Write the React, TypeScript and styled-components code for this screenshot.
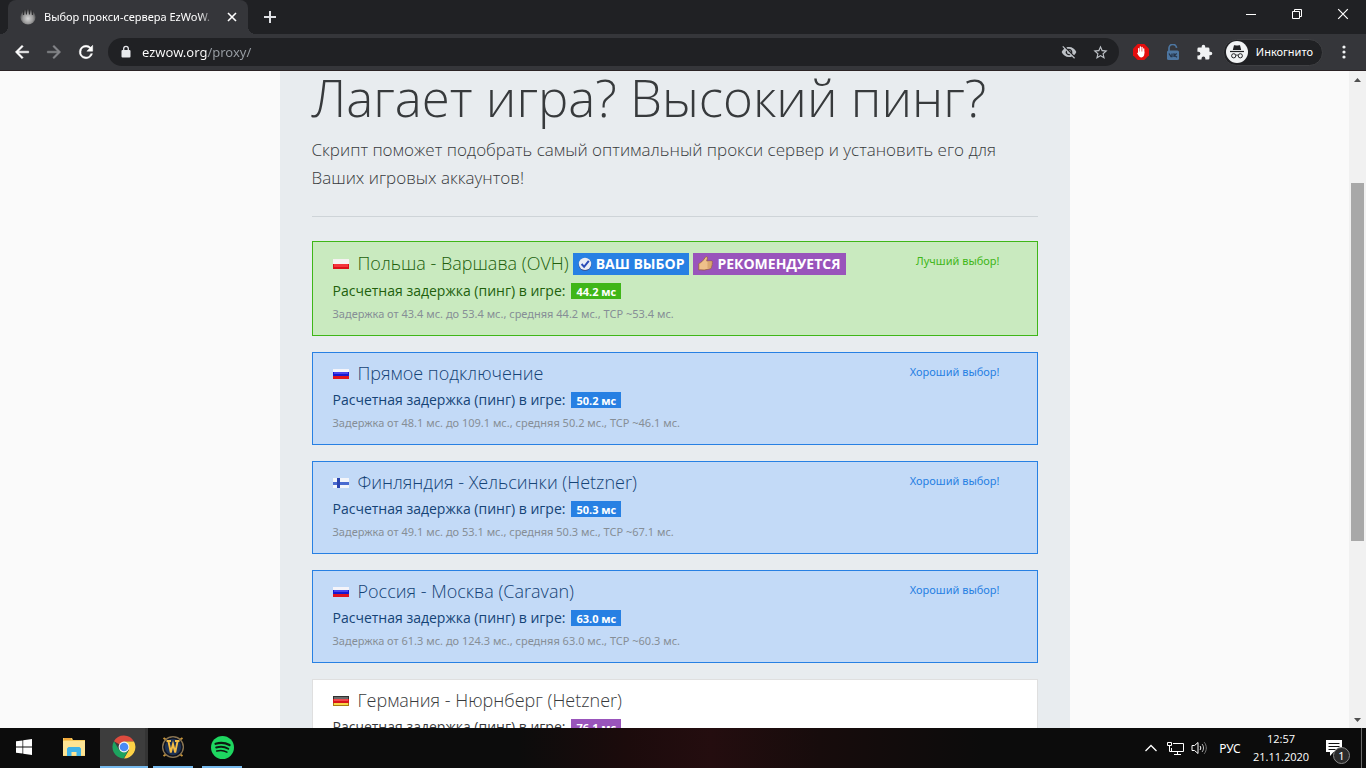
import React from "react";
import styled, { createGlobalStyle, css } from "styled-components";

const GlobalStyle = createGlobalStyle`
  * { box-sizing: border-box; }
  html, body { margin: 0; height: 100%; overflow: hidden; }
  #root { height: 100%; }
  body { font-family: "Noto Sans", "Open Sans", sans-serif; background: #202124; color: #373a3c; }
  button, input { font: inherit; border: 0; padding: 0; margin: 0; background: none; color: inherit; }
  svg { display: block; flex: none; }
`;

const Screen = styled.div`
  display: flex;
  flex-direction: column;
  height: 100vh;
`;

/* ---------- browser ---------- */

const TabStrip = styled.header`
  display: flex;
  height: 34px;
  background: #202124;
  color: #fff;
`;

const TabFoot = styled.span<{ $side: "left" | "right" }>`
  width: 8px;
  height: 8px;
  align-self: flex-end;
  background: radial-gradient(circle at ${(p) => (p.$side === "left" ? "0 0" : "100% 0")}, #202124 8px, #35363a 8px);
`;

const Tab = styled.div`
  display: flex;
  align-items: center;
  width: 240px;
  padding: 0 8px 0 12px;
  gap: 8px;
  border-radius: 8px 8px 0 0;
  background: #35363a;
`;

const TabTitle = styled.span`
  flex: 1;
  overflow: hidden;
  white-space: nowrap;
  font-size: 11px;
  line-height: 18px;
  mask-image: linear-gradient(to right, #000 90%, transparent);
`;

const IconButton = styled.button<{ $width: number }>`
  display: flex;
  align-items: center;
  justify-content: center;
  flex: none;
  width: ${(p) => p.$width}px;
`;

const WindowControls = styled.div`
  display: flex;
  height: 28px;
  margin-left: auto;
`;

const Toolbar = styled.nav`
  display: flex;
  align-items: center;
  height: 37px;
  padding: 0 6px;
  background: #35363a;
  border-bottom: 1px solid #2b2325;
  color: #fff;
`;

const AddressBar = styled.div`
  display: flex;
  align-items: center;
  flex: 1;
  height: 28px;
  margin: 0 6px;
  padding: 0 2px 0 12px;
  gap: 10px;
  border-radius: 14px;
  background: #202124;
`;

const AddressInput = styled.input`
  flex: 1;
  min-width: 0;
  height: 20px;
  font-size: 13px;
  line-height: 20px;
  outline: 0;
  color: transparent;
  background: linear-gradient(to right, #fff 66px, #9aa0a6 66px);
  background-clip: text;
`;

const AddressActions = styled.div`
  display: flex;
  height: 28px;
`;

const Incognito = styled.button`
  display: flex;
  align-items: center;
  gap: 8px;
  height: 27px;
  margin: 0 5px 0 2px;
  padding: 0 9px 0 2px;
  border: 1px solid #3f4043;
  border-radius: 14px;
  background: #202124;
  font-size: 11px;
  line-height: 20px;
`;

/* ---------- page ---------- */

const Viewport = styled.div`
  display: flex;
  flex: 1;
  min-height: 0;
  background: #fafafa;
`;

const Page = styled.main`
  flex: 1;
  min-width: 0;
  overflow: hidden;
`;

const Container = styled.div`
  max-width: 790px;
  margin: 0 auto;
  padding: 0 32px;
  background: #e8ecef;
`;

const Heading = styled.h1`
  margin: 0 0 13px;
  font-family: "Open Sans", sans-serif;
  font-size: 51px;
  font-weight: 300;
  line-height: 52px;
`;

const Lead = styled.p`
  margin: 0;
  font-family: "Open Sans", sans-serif;
  font-size: 17px;
  font-weight: 300;
  line-height: 28px;
`;

const Rule = styled.hr`
  height: 1px;
  margin: 24px 0;
  border: 0;
  background: #ced4d8;
`;

type Tone = "best" | "good" | "plain";

const tones: Record<Tone, { border: string; back: string; text: string; accent: string }> = {
  best: { border: "#3fb618", back: "#c9eabf", text: "#215f0c", accent: "#3fb618" },
  good: { border: "#2780e3", back: "#c3daf7", text: "#144376", accent: "#2780e3" },
  plain: { border: "#dfdfdf", back: "#ffffff", text: "#373a3c", accent: "#9954bb" },
};

const List = styled.ul`
  display: flex;
  flex-direction: column;
  gap: 16px;
  margin: 0;
  padding: 0;
  list-style: none;
`;

const Card = styled.li<{ $tone: Tone }>`
  display: flex;
  justify-content: space-between;
  padding: 8px 37px 11px 20px;
  ${(p) => css`
    border: 1px solid ${tones[p.$tone].border};
    background: ${tones[p.$tone].back};
    color: ${tones[p.$tone].text};
  `}
`;

const CardTitle = styled.h2<{ $tall: boolean }>`
  display: flex;
  align-items: center;
  gap: 4px;
  margin: 0;
  height: ${(p) => (p.$tall ? 28 : 26)}px;
  padding-bottom: 2px;
  font-family: "Open Sans", sans-serif;
  font-size: 18px;
  font-weight: 300;
  line-height: 24px;
`;

const Place = styled.span`
  margin-left: 4px;
`;

const Tag = styled.span<{ $color: string }>`
  display: inline-flex;
  align-items: center;
  gap: 4px;
  height: 22px;
  margin-top: 1px;
  padding: 0 5px;
  background: ${(p) => p.$color};
  color: #fff;
  font-size: 14px;
  font-weight: 700;
  line-height: 22px;
`;

const PingLine = styled.p`
  display: flex;
  align-items: center;
  gap: 6px;
  margin: 0;
  font-family: "Open Sans", sans-serif;
  font-size: 14px;
  line-height: 26px;
`;

const PingBadge = styled.span<{ $color: string }>`
  height: 16px;
  padding: 0 5px;
  background: ${(p) => p.$color};
  color: #fff;
  font-size: 11px;
  font-weight: 700;
  line-height: 17px;
`;

const Details = styled.p`
  margin: 0;
  color: #868e96;
  font-size: 11px;
  line-height: 20px;
`;

const Verdict = styled.span<{ $color: string }>`
  color: ${(p) => p.$color};
  font-size: 11px;
  line-height: 22px;
`;

const Scrollbar = styled.div`
  display: flex;
  flex-direction: column;
  align-items: center;
  width: 17px;
  background: #f1f1f1;
`;

const ScrollArrow = styled.div`
  display: flex;
  align-items: center;
  justify-content: center;
  height: 17px;
`;

const ScrollGap = styled.div<{ $share: number }>`
  flex: ${(p) => p.$share};
`;

const ScrollThumb = styled.div`
  flex: 358;
  width: 13px;
  background: #a8a8a8;
`;

/* ---------- taskbar ---------- */

const Taskbar = styled.footer`
  display: flex;
  align-items: stretch;
  height: 40px;
  padding-right: 4px;
  color: #fff;
  background: linear-gradient(to right, #0c0c0c 0 38%, #1c0b0c 46%, #240d0f 52%, #170c0c 60%, #0c0c0c 72%);
`;

const TaskButton = styled.button<{ $open?: boolean; $active?: boolean; $spaced?: boolean }>`
  display: flex;
  align-items: center;
  justify-content: center;
  width: ${(p) => (p.$open && !p.$active ? 40 : 48)}px;
  ${(p) => p.$spaced && css`margin: 0 2px;`}
  ${(p) => p.$open && !p.$active && css`margin: 0 4px 0 5px;`}
  ${(p) => p.$active && css`background: #3d3d3d; box-shadow: inset -3px 0 #343434;`}
  border-bottom: ${(p) => (p.$open ? "2px solid #76b9ed" : "2px solid transparent")};
`;

const Tray = styled.div`
  display: flex;
  align-items: center;
  margin-left: auto;
`;

const Language = styled.button`
  width: 38px;
  font-size: 12px;
`;

const Clock = styled.time`
  width: 64px;
  text-align: center;
  font-family: "Open Sans", sans-serif;
  font-size: 11px;
  line-height: 18px;
`;

const Notifications = styled.button`
  position: relative;
  display: flex;
  align-items: center;
  justify-content: center;
  width: 42px;
  height: 40px;
  margin-right: 6px;
`;

const NoticeCount = styled.span`
  position: absolute;
  left: 20px;
  top: 19px;
  width: 17px;
  height: 17px;
  border: 1px solid #8a8a8a;
  border-radius: 50%;
  background: #2b2b2b;
  font-size: 11px;
  line-height: 15px;
  text-align: center;
`;

const DesktopEdge = styled.span`
  width: 1px;
  background: #6a6a6a;
`;

/* ---------- drawings ---------- */

const Favicon = () => (
  <svg width="16" height="16" viewBox="0 0 16 16">
    <defs>
      <radialGradient id="fav" cx="50%" cy="60%" r="55%">
        <stop offset="0" stopColor="#d8d8d8" />
        <stop offset="0.6" stopColor="#9a9a9a" />
        <stop offset="1" stopColor="#4a4a4c" />
      </radialGradient>
    </defs>
    <circle cx="8" cy="8" r="7.6" fill="url(#fav)" />
    <path d="M3.600 1.500v4.500M6.400 0.400v5M9.400 0.400v5M12.400 1.500v4.500" stroke="#2c2c2e" strokeWidth="1.100" />
  </svg>
);

const Cross = ({ size, width }: { size: number; width: number }) => (
  <svg width={size} height={size} viewBox="0 0 10 10" stroke="#fff" strokeWidth={width}>
    <path d="M1 1l8 8M9 1l-8 8" />
  </svg>
);

const Plus = () => (
  <svg width="12" height="12" viewBox="0 0 12 12" fill="#dfe1e5">
    <path d="M5 0h2v5h5v2H7v5H5V7H0V5h5z" />
  </svg>
);

const Arrow = ({ color, flip }: { color: string; flip?: boolean }) => (
  <svg width="20" height="20" viewBox="0 0 24 24" fill={color}>
    <path d={flip ? "M12 4l-1.4 1.4 5.6 5.6H4v2h12.200l-5.600 5.600L12 20l8-8z" : "M20 11H7.800l5.600-5.600L12 4l-8 8 8 8 1.400-1.400L7.800 13H20z"} stroke={color} strokeWidth="0.600" />
  </svg>
);

const Reload = () => (
  <svg width="20" height="20" viewBox="0 0 24 24" fill="#fff" stroke="#fff" strokeWidth="0.600">
    <path d="M17.650 6.350A7.960 7.960 0 0 0 12 4a8 8 0 1 0 7.730 10h-2.080A6 6 0 1 1 12 6c1.660 0 3.140.69 4.220 1.780L13 11h7V4z" />
  </svg>
);

const Lock = () => (
  <svg width="12" height="14" viewBox="0 0 12 14">
    <rect x="1.500" y="5" width="9" height="7.500" rx="1" fill="#e8eaed" />
    <path d="M3.700 5.500V3.600a2.300 2.300 0 0 1 4.600 0v1.900" fill="none" stroke="#e8eaed" strokeWidth="1.300" />
  </svg>
);

const EyeOff = () => (
  <svg width="16" height="16" viewBox="0 0 24 24" fill="#bdc1c6">
    <path d="M12 7c2.760 0 5 2.240 5 5 0 .65-.13 1.260-.36 1.830l2.920 2.920c1.510-1.260 2.700-2.890 3.430-4.750-1.730-4.390-6-7.500-11-7.500-1.400 0-2.740.25-3.980.7l2.160 2.160C10.740 7.130 11.350 7 12 7zM2 4.270l2.280 2.280.46.46A11.800 11.800 0 0 0 1 12c1.730 4.390 6 7.500 11 7.500 1.550 0 3.030-.3 4.380-.84l.42.42L19.730 22 21 20.730 3.270 3zM7.530 9.800l1.550 1.550c-.05.21-.08.43-.08.65a3 3 0 0 0 3.650 2.920l1.550 1.550A5 5 0 0 1 7.530 9.800zm4.310-.78l3.150 3.150.02-.16a3 3 0 0 0-3-3z" />
  </svg>
);

const Star = () => (
  <svg width="17" height="17" viewBox="0 0 24 24" fill="#bdc1c6">
    <path d="M22 9.240l-7.190-.62L12 2 9.190 8.630 2 9.240l5.460 4.730L5.820 21 12 17.270 18.180 21l-1.630-7.030zM12 15.400l-3.760 2.270 1-4.280-3.320-2.880 4.380-.38L12 6.100l1.710 4.040 4.380.38-3.320 2.880 1 4.280z" />
  </svg>
);

const AdBlock = () => (
  <svg width="16" height="16" viewBox="0 0 16 16">
    <path d="M4.700 0h6.600L16 4.700v6.600L11.300 16H4.700L0 11.300V4.700z" fill="#e40d0d" />
    <path d="M5.700 9V4.600M7.400 8V3M9.100 8V3.300M10.700 9V4.800" stroke="#fff" strokeWidth="1.300" strokeLinecap="round" />
    <path d="M5.100 7.600h6.200v2.200c0 2-1 3.600-2.800 3.600-1.900 0-2.600-1.300-4.400-4.200.3-.6 1-.3 1.500.2z" fill="#fff" />
  </svg>
);

const VkLock = () => (
  <svg width="14" height="16" viewBox="0 0 14 16">
    <path d="M3 7V4.500a3.800 3.800 0 0 1 7.600-.6" fill="none" stroke="#4d76a1" strokeWidth="1.700" />
    <rect x="1" y="6.500" width="12" height="9.500" rx="1.500" fill="#4d76a1" />
    <path d="M3 9.500l2 3.200h1V9.500M8 9.300v3.700M10.800 9.500L8.300 11.200l2.700 2" fill="none" stroke="#26354a" strokeWidth="1.300" />
  </svg>
);

const Puzzle = () => (
  <svg width="17" height="17" viewBox="0 0 24 24" fill="#f1f3f4">
    <path d="M20.500 11H19V7a2 2 0 0 0-2-2h-4V3.500a2.500 2.500 0 0 0-5 0V5H4a2 2 0 0 0-1.990 2v3.800H3.500a2.700 2.700 0 0 1 0 5.400H2V20a2 2 0 0 0 2 2h3.800v-1.500a2.700 2.700 0 0 1 5.400 0V22H17a2 2 0 0 0 2-2v-4h1.500a2.500 2.500 0 0 0 0-5z" />
  </svg>
);

const IncognitoMark = () => (
  <svg width="22" height="22" viewBox="0 0 22 22">
    <circle cx="11" cy="11" r="11" fill="#f1f3f4" />
    <path d="M8 4.300c1.200-.4 1.700.3 3 .3s1.800-.7 3-.3L15.200 9H6.800z" fill="#202124" />
    <path d="M4 10.500h14" stroke="#202124" strokeWidth="1.200" />
    <g fill="none" stroke="#202124" strokeWidth="1">
      <circle cx="7.700" cy="14.800" r="2.100" />
      <circle cx="14.300" cy="14.800" r="2.100" />
      <path d="M9.800 14.400c.8-.5 1.600-.5 2.400 0" />
    </g>
  </svg>
);

const Dots = () => (
  <svg width="4" height="14" viewBox="0 0 4 14" fill="#f1f3f4">
    <circle cx="2" cy="2" r="1.600" />
    <circle cx="2" cy="7" r="1.600" />
    <circle cx="2" cy="12" r="1.600" />
  </svg>
);

type Country = "pl" | "ru" | "fi" | "de";

const Flag = ({ country }: { country: Country }) => (
  <svg width="17" height="14" viewBox="0 -2 17 14" role="img" aria-label={country}>
    {country === "pl" && (
      <>
        <rect y="1" width="16" height="5" fill="#f6f2f2" />
        <rect y="6" width="16" height="5" fill="#dc0f17" />
        <rect x="1" y="6" width="14" height="3" fill="#f4343a" />
      </>
    )}
    {country === "ru" && (
      <>
        <rect y="1" width="16" height="3" fill="#f4f4fa" />
        <rect y="4" width="16" height="4" fill="#1717cf" />
        <rect x="1" y="4" width="14" height="2" fill="#4545ee" />
        <rect y="8" width="16" height="3" fill="#e0141c" />
      </>
    )}
    {country === "fi" && (
      <>
        <rect y="1" width="16" height="10" fill="#f3f5fa" />
        <rect y="5" width="16" height="3" fill="#4a6bd0" />
        <rect x="4" y="1" width="3" height="10" fill="#2b45b0" />
      </>
    )}
    {country === "de" && (
      <>
        <rect y="1" width="16" height="3" fill="#2f2f2f" />
        <rect x="1" y="2" width="14" height="2" fill="#6a6a6a" />
        <rect y="4" width="16" height="4" fill="#d8151b" />
        <rect x="1" y="4" width="14" height="2" fill="#f0484c" />
        <rect y="8" width="16" height="3" fill="#a87b12" />
        <rect x="1" y="8" width="14" height="2" fill="#f7d84a" />
      </>
    )}
  </svg>
);

const CheckMark = () => (
  <svg width="14" height="14" viewBox="0 0 14 14">
    <circle cx="7" cy="7.400" r="6.400" fill="#3e4a86" />
    <circle cx="7" cy="6.900" r="6.200" fill="#e9edf6" />
    <path d="M3.600 7l2.500 2.800L10.800 3.800" fill="none" stroke="#2a4bb8" strokeWidth="2" />
  </svg>
);

const ThumbUp = () => (
  <svg width="15" height="15" viewBox="0 0 15 15">
    <path d="M.8 7.600C2.600 7 5 5 7 1.800 7.900.2 9.700.4 9.400 2.300L8.700 5h4.700c1.300 0 1.300 1.600.4 1.900.9.500.7 1.800-.2 2 .7.600.4 1.700-.4 1.900.5.800.1 1.900-1 2L6.300 14c-2 .2-3.600-.5-5.500 0z" fill="#efc08a" stroke="#93602f" strokeWidth="0.700" />
    <path d="M9.500 7h4.200M9.500 9h4M9.500 11h3.500" stroke="#b57a41" strokeWidth="0.700" />
  </svg>
);

const Triangle = ({ down }: { down?: boolean }) => (
  <svg width="7" height="4" viewBox="0 0 7 4" fill="#505050">
    <path d={down ? "M0 0h7L3.500 4z" : "M0 4h7L3.500 0z"} />
  </svg>
);

const WindowsMark = () => (
  <svg width="16" height="16" viewBox="0 0 16 16" fill="#fff">
    <path d="M0 2.300l6.500-.9v6.200H0zM7.200 1.300L16 0v7.600H7.200zM0 8.400h6.500v6.200L0 13.700zM7.200 8.400H16V16l-8.800-1.300z" />
  </svg>
);

const FolderMark = () => (
  <svg width="22" height="20" viewBox="0 0 22 20">
    <path d="M0 1h9l1 2h12v16H0z" fill="#f5c95c" />
    <path d="M1 1h7v2H1z" fill="#f2a93b" />
    <path d="M0 4h22v14.500H0z" fill="#fde494" />
    <path d="M4 19v-7.500L5.500 10h11l1.500 1.500V19h-4.500v-4h-5v4z" fill="#3fb3e8" />
  </svg>
);

const ChromeMark = () => (
  <svg width="24" height="24" viewBox="0 0 24 24">
    <path d="M12 12L1.900 6.200A11.500 11.500 0 0 1 22 6.400L12 6.400z" fill="#dd4b3e" />
    <path d="M12 6.400h10A11.500 11.500 0 0 1 12 23.500l5-8.500z" fill="#fdd246" />
    <path d="M2 6.200l5.200 8.900L12 17.600 16 16l-4.500 7.500A11.500 11.500 0 0 1 2 6.200z" fill="#1da35f" />
    <circle cx="12" cy="12" r="5.400" fill="#f4f4f4" />
    <circle cx="12" cy="12" r="4.300" fill="#4a8af5" />
  </svg>
);

const WowMark = () => (
  <svg width="24" height="24" viewBox="0 0 24 24">
    <path d="M2.500 3l3 2M21.500 3l-3 2M2.500 21l3-2M21.500 21l-3-2" stroke="#c8953a" strokeWidth="2" />
    <circle cx="12" cy="12" r="10.300" fill="#1d3153" stroke="#8a7450" strokeWidth="1.500" />
    <circle cx="12" cy="12" r="8.900" fill="none" stroke="#10131c" strokeWidth="1.400" />
    <path d="M5.500 6h4.500M14 6h4.500M7.500 6.500L9.800 17.500 12 9l2.200 8.500 2.300-11" fill="none" stroke="#f4bd45" strokeWidth="1.900" />
  </svg>
);

const SpotifyMark = () => (
  <svg width="23" height="23" viewBox="0 0 24 24">
    <circle cx="12" cy="12" r="12" fill="#1ed760" />
    <g fill="none" stroke="#0d1a11" strokeLinecap="round">
      <path d="M4.800 8.100c5-1.500 10.300-1 14.500 1.400" strokeWidth="2.400" />
      <path d="M5.400 12c4.500-1.300 9-.8 12.600 1.300" strokeWidth="2" />
      <path d="M6 15.700c3.900-1.100 7.500-.7 10.600 1.100" strokeWidth="1.600" />
    </g>
  </svg>
);

const NetworkMark = () => (
  <svg width="17" height="15" viewBox="0 0 17 15" fill="none" stroke="#fff">
    <path d="M6 2.500h10.500v8H4.500V7M10.500 10.500v3M7 13.500h7" />
    <path d="M.5 1.500h4v3h-4zM2.500 5v5.500H5" />
  </svg>
);

const VolumeMark = () => (
  <svg width="17" height="14" viewBox="0 0 17 14" fill="none" stroke="#fff">
    <path d="M1 4.500h2.500L7 1.500v11L3.500 9.500H1z" />
    <path d="M9 5c1 1.200 1 2.800 0 4" />
    <path d="M11 3c2 2.300 2 5.700 0 8" stroke="#bbb" />
    <path d="M13.200 1.200c2.800 3.300 2.800 8.300 0 11.600" stroke="#777" />
  </svg>
);

const NoticeMark = () => (
  <svg width="16" height="16" viewBox="0 0 16 16">
    <path d="M0 0h16v12H7.500L4 16v-4H0z" fill="#fff" />
    <path d="M2.500 3.500h11M2.500 6.500h11M2.500 9.500h7" stroke="#111" />
  </svg>
);

/* ---------- data ---------- */

interface Server {
  country: Country;
  name: string;
  ping: string;
  details: string;
  tone: Tone;
  verdict?: string;
  chosen?: boolean;
}

const servers: Server[] = [
  { country: "pl", name: "Польша - Варшава (OVH)", ping: "44.2 мс", details: "Задержка от 43.4 мс. до 53.4 мс., средняя 44.2 мс., TCP ~53.4 мс.", tone: "best", verdict: "Лучший выбор!", chosen: true },
  { country: "ru", name: "Прямое подключение", ping: "50.2 мс", details: "Задержка от 48.1 мс. до 109.1 мс., средняя 50.2 мс., TCP ~46.1 мс.", tone: "good", verdict: "Хороший выбор!" },
  { country: "fi", name: "Финляндия - Хельсинки (Hetzner)", ping: "50.3 мс", details: "Задержка от 49.1 мс. до 53.1 мс., средняя 50.3 мс., TCP ~67.1 мс.", tone: "good", verdict: "Хороший выбор!" },
  { country: "ru", name: "Россия - Москва (Caravan)", ping: "63.0 мс", details: "Задержка от 61.3 мс. до 124.3 мс., средняя 63.0 мс., TCP ~60.3 мс.", tone: "good", verdict: "Хороший выбор!" },
  { country: "de", name: "Германия - Нюрнберг (Hetzner)", ping: "76.1 мс", details: "", tone: "plain" },
];

const ServerCard = ({ server }: { server: Server }) => {
  const accent = tones[server.tone].accent;
  return (
    <Card $tone={server.tone}>
      <div>
        <CardTitle $tall={!!server.chosen}>
          <Flag country={server.country} />
          <Place>{server.name}</Place>
          {server.chosen && (
            <>
              <Tag $color="#2780e3"><CheckMark />ВАШ ВЫБОР</Tag>
              <Tag $color="#9954bb"><ThumbUp />РЕКОМЕНДУЕТСЯ</Tag>
            </>
          )}
        </CardTitle>
        <PingLine>
          Расчетная задержка (пинг) в игре:
          <PingBadge $color={accent}>{server.ping}</PingBadge>
        </PingLine>
        {server.details && <Details>{server.details}</Details>}
      </div>
      {server.verdict && <Verdict $color={accent}>{server.verdict}</Verdict>}
    </Card>
  );
};

export default function App() {
  return (
    <Screen>
      <GlobalStyle />
      <TabStrip>
        <TabFoot $side="left" />
        <Tab>
          <Favicon />
          <TabTitle>Выбор прокси-сервера EzWoW.</TabTitle>
          <IconButton $width={16} aria-label="Закрыть вкладку"><Cross size={10} width={1.6} /></IconButton>
        </Tab>
        <TabFoot $side="right" />
        <IconButton $width={28} aria-label="Новая вкладка"><Plus /></IconButton>
        <WindowControls>
          <IconButton $width={46} aria-label="Свернуть">
            <svg width="10" height="10" viewBox="0 0 10 10"><path d="M0 5.500h10" stroke="#fff" /></svg>
          </IconButton>
          <IconButton $width={46} aria-label="Восстановить">
            <svg width="10" height="10" viewBox="0 0 10 10" fill="none" stroke="#fff"><path d="M.5 2.500h7v7h-7zM2.500 2.500v-2h7v7h-2" /></svg>
          </IconButton>
          <IconButton $width={46} aria-label="Закрыть"><Cross size={12} width={1} /></IconButton>
        </WindowControls>
      </TabStrip>

      <Toolbar>
        <IconButton $width={32} aria-label="Назад"><Arrow color="#fff" /></IconButton>
        <IconButton $width={32} aria-label="Вперёд"><Arrow color="#85868a" flip /></IconButton>
        <IconButton $width={32} aria-label="Обновить"><Reload /></IconButton>
        <AddressBar>
          <Lock />
          <AddressInput aria-label="Адрес" defaultValue="ezwow.org/proxy/" />
          <AddressActions>
            <IconButton $width={32} aria-label="Файлы cookie"><EyeOff /></IconButton>
            <IconButton $width={32} aria-label="Закладка"><Star /></IconButton>
          </AddressActions>
        </AddressBar>
        <IconButton $width={32} aria-label="AdBlock"><AdBlock /></IconButton>
        <IconButton $width={32} aria-label="VK"><VkLock /></IconButton>
        <IconButton $width={32} aria-label="Расширения"><Puzzle /></IconButton>
        <Incognito><IncognitoMark />Инкогнито</Incognito>
        <IconButton $width={32} aria-label="Меню"><Dots /></IconButton>
      </Toolbar>

      <Viewport>
        <Page>
          <Container>
            <Heading>Лагает игра? Высокий пинг?</Heading>
            <Lead>Скрипт поможет подобрать самый оптимальный прокси сервер и установить его для Ваших игровых аккаунтов!</Lead>
            <Rule />
            <List>
              {servers.map((s) => <ServerCard key={s.name} server={s} />)}
            </List>
          </Container>
        </Page>
        <Scrollbar aria-hidden="true">
          <ScrollArrow><Triangle /></ScrollArrow>
          <ScrollGap $share={95} />
          <ScrollThumb />
          <ScrollGap $share={170} />
          <ScrollArrow><Triangle down /></ScrollArrow>
        </Scrollbar>
      </Viewport>

      <Taskbar>
        <TaskButton aria-label="Пуск"><WindowsMark /></TaskButton>
        <TaskButton aria-label="Проводник" $spaced><FolderMark /></TaskButton>
        <TaskButton aria-label="Chrome" $open $active><ChromeMark /></TaskButton>
        <TaskButton aria-label="World of Warcraft" $open><WowMark /></TaskButton>
        <TaskButton aria-label="Spotify" $open><SpotifyMark /></TaskButton>
        <Tray>
          <IconButton $width={24} aria-label="Скрытые значки">
            <svg width="12" height="8" viewBox="0 0 12 8" fill="none" stroke="#fff" strokeWidth="1.3"><path d="M.5 7L6 1.500 11.500 7" /></svg>
          </IconButton>
          <IconButton $width={24} aria-label="Сеть"><NetworkMark /></IconButton>
          <IconButton $width={24} aria-label="Громкость"><VolumeMark /></IconButton>
          <Language>РУС</Language>
          <Clock>12:57<br />21.11.2020</Clock>
          <Notifications aria-label="Уведомления">
            <NoticeMark />
            <NoticeCount>1</NoticeCount>
          </Notifications>
        </Tray>
        <DesktopEdge />
      </Taskbar>
    </Screen>
  );
}
